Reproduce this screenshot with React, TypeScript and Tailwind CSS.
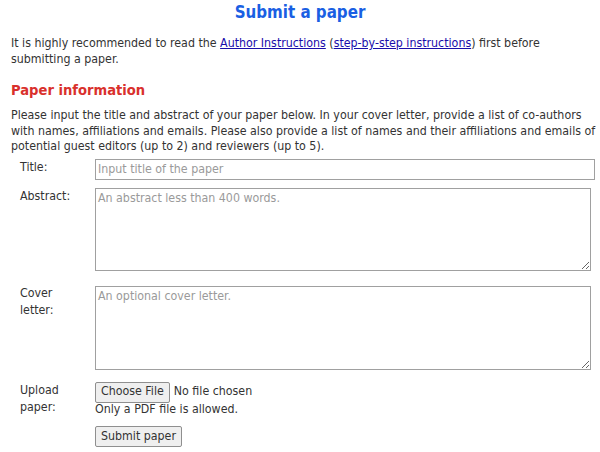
export default function App() {
  return (
    <div className="min-h-[452px] bg-white pl-[11px] pr-[2px] text-[12.3px] leading-[15.5px] text-[#333] font-['DejaVu_Sans_Condensed','DejaVu_Sans',Tahoma,sans-serif]">
      <h1 className="pr-[9px] text-center text-[16.8px] font-bold leading-[24px] text-[#1a5fe3]">Submit a paper</h1>

      <p className="mt-[12px] pr-[9px]">
        It is highly recommended to read the{" "}
        <a href="#" className="text-[#1a0dab] underline">Author Instructions</a> (
        <a href="#" className="text-[#1a0dab] underline">step-by-step instructions</a>) first before submitting a paper.
      </p>

      <h2 className="mt-[13px] text-[14.6px] font-bold leading-[20px] text-[#d9302c]">Paper information</h2>

      <p className="mt-[8px]">
        Please input the title and abstract of your paper below. In your cover letter, provide a list of co-authors with
        names, affiliations and emails. Please also provide a list of names and their affiliations and emails of potential
        guest editors (up to 2) and reviewers (up to 5).
      </p>

      <div className="mt-[4px] grid grid-cols-[75px_1fr] pl-[9px] leading-[17px]">
        <label>Title:</label>
        <input
          className="h-[21px] w-[500px] border border-[#a0a0a0] px-[2px] text-[12.3px] outline-none placeholder:text-[#9a9a9a]"
          placeholder="Input title of the paper"
        />

        <label className="mt-[8px]">Abstract:</label>
        <textarea
          className="mt-[8px] h-[83px] w-[496px] resize border border-[#a0a0a0] px-[2px] py-[1px] text-[12.3px] leading-[17px] outline-none placeholder:text-[#9a9a9a]"
          placeholder="An abstract less than 400 words."
        />

        <label className="mt-[14px]">
          Cover
          <br />
          letter:
        </label>
        <textarea
          className="mt-[15px] h-[84px] w-[496px] resize border border-[#a0a0a0] px-[2px] py-[1px] text-[12.3px] leading-[17px] outline-none placeholder:text-[#9a9a9a]"
          placeholder="An optional cover letter."
        />

        <label className="mt-[12px]">
          Upload
          <br />
          paper:
        </label>
        <div className="mt-[12px] leading-[15.5px]">
          <div className="flex items-center gap-[4px]">
            <button className="h-[21px] rounded-[2px] border border-[#8f8f8f] bg-[#efefef] px-[5px] text-[12.3px]">
              Choose File
            </button>
            <span>No file chosen</span>
          </div>
          <div className="mt-[-1px]">Only a PDF file is allowed.</div>
          <button className="mt-[9px] h-[21px] rounded-[2px] border border-[#8f8f8f] bg-[#efefef] px-[5px] text-[12.3px]">
            Submit paper
          </button>
        </div>
      </div>
    </div>
  );
}
